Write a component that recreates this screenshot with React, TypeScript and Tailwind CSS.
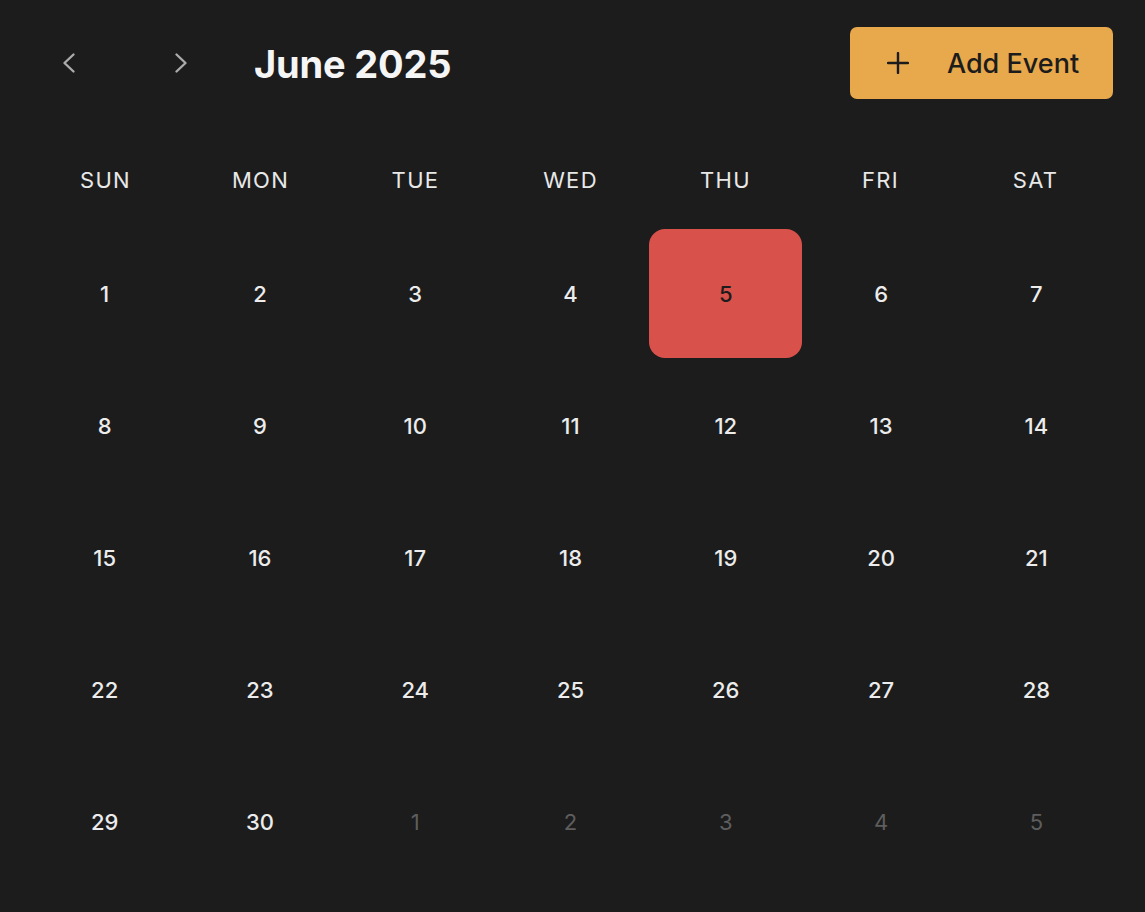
import React from "react";

const days = ["SUN", "MON", "TUE", "WED", "THU", "FRI", "SAT"];

type Cell = { n: number; muted?: boolean; today?: boolean };

const cells: Cell[] = [];
for (let i = 1; i <= 30; i++) cells.push({ n: i, today: i === 5 });
for (let i = 1; i <= 5; i++) cells.push({ n: i, muted: true });

function Chevron({ dir }: { dir: "left" | "right" }) {
  return (
    <svg width="16" height="22" viewBox="0 0 16 22" fill="none">
      <path
        d={dir === "left" ? "M12.5 2.5 L3.5 11 L12.5 19.5" : "M3.5 2.5 L12.5 11 L3.5 19.5"}
        stroke="#ababab"
        strokeWidth="2.4"
        strokeLinecap="round"
        strokeLinejoin="round"
      />
    </svg>
  );
}

export default function App() {
  return (
    <div
      className="min-h-screen bg-[#1c1c1c] pl-[28px] pr-[32px] pt-[27px]"
      style={{ fontFamily: "Inter, 'Liberation Sans', sans-serif" }}
    >
      <div className="flex items-center justify-between h-[72px]">
        <div className="flex items-center">
          <button className="ml-[21px] w-10 h-10 flex items-center justify-center">
            <Chevron dir="left" />
          </button>
          <button className="ml-[72px] w-10 h-10 flex items-center justify-center">
            <Chevron dir="right" />
          </button>
          <h1 className="ml-[53px] text-[38px] font-bold text-[#f5f5f5] tracking-[-0.005em] leading-none mt-[2px]">
            June 2025
          </h1>
        </div>
        <button className="h-[72px] w-[263px] rounded-[7px] bg-[#e8a84c] flex items-center pl-[37px] text-[#1c1c1c]">
          <svg width="22" height="22" viewBox="0 0 22 22" fill="none">
            <path d="M11 1 V21 M1 11 H21" stroke="#1c1c1c" strokeWidth="2.4" strokeLinecap="round" />
          </svg>
          <span className="ml-[38px] text-[27px] font-medium leading-none">Add Event</span>
        </button>
      </div>

      <div className="grid grid-cols-7 mt-[61px] h-[40px] items-center">
        {days.map((d) => (
          <div key={d} className="text-center text-[22px] tracking-[0.06em] text-[#e8e8e8]">
            {d}
          </div>
        ))}
      </div>

      <div className="grid grid-cols-7 gap-x-[2px] gap-y-[3px] mt-[29px]">
        {cells.map((c, i) => (
          <div
            key={i}
            className={
              c.today
                ? "h-[129px] pt-[2px] rounded-[16px] bg-[#d9514b] flex items-center justify-center text-[22px] font-medium text-[#1c1c1c]"
                : c.muted
                ? "h-[129px] pt-[2px] flex items-center justify-center text-[22px] text-[#5e5e5e]"
                : "h-[129px] pt-[2px] flex items-center justify-center text-[22px] font-medium text-[#ececec]"
            }
          >
            {c.n}
          </div>
        ))}
      </div>
    </div>
  );
}
